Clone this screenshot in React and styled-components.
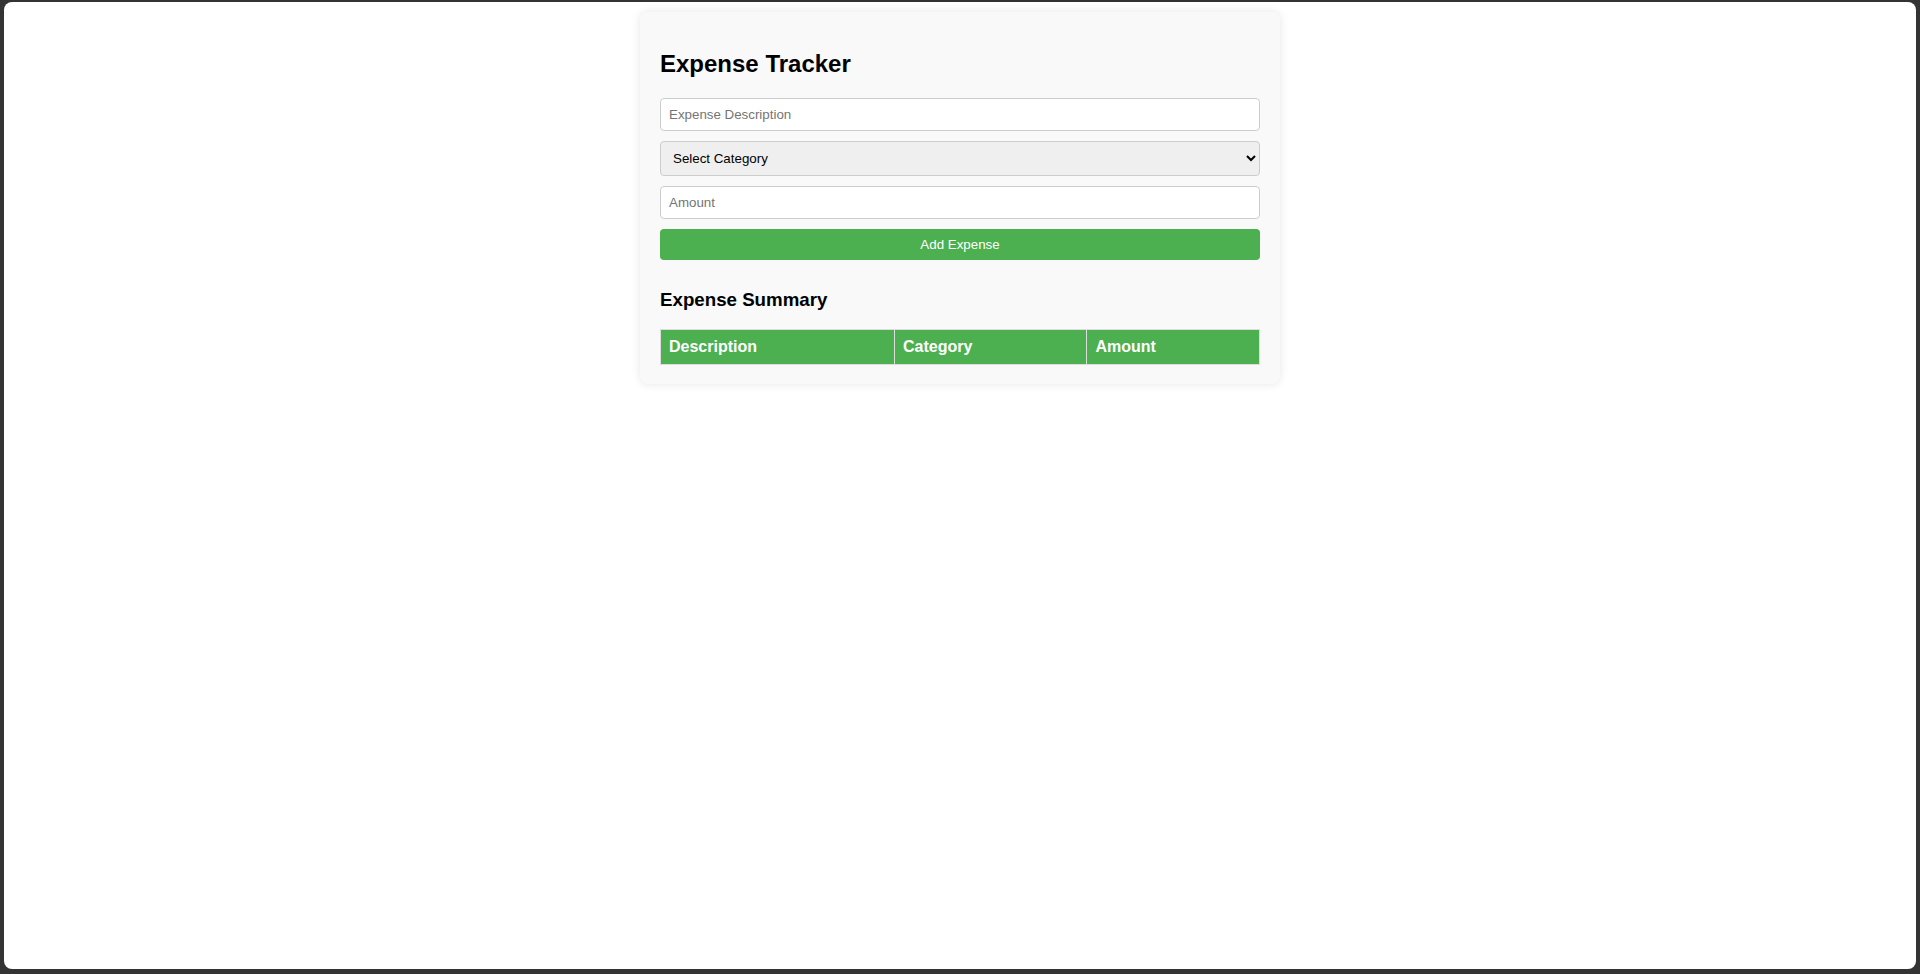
import React, { useState } from "react";
import styled, { createGlobalStyle } from "styled-components";

const GlobalStyle = createGlobalStyle`
  html, body {
    margin: 0;
    padding: 0;
    height: 100%;
    background: #333333;
  }
  body {
    font-family: "Liberation Sans", Arial, sans-serif;
  }
  #root {
    height: 100%;
  }
`;

const Frame = styled.div`
  box-sizing: border-box;
  height: calc(100% - 7px);
  margin: 2px 4px 5px 4px;
  background: #ffffff;
  border-radius: 8px;
  padding-top: 10px;
  overflow: hidden;
`;

const Card = styled.div`
  width: 600px;
  margin: 0 auto;
  padding: 20px 20px 19px;
  background: #f9f9f9;
  border-radius: 8px;
  box-shadow: 0 0 10px rgba(0, 0, 0, 0.1);
`;

const Title = styled.h2`
  font-size: 24px;
  font-weight: bold;
  margin: 18px 0 20px;
  color: #000;
`;

const Form = styled.form`
  display: flex;
  flex-direction: column;
  gap: 10px;
  margin: 0;
`;

const TextInput = styled.input`
  box-sizing: border-box;
  width: 100%;
  padding: 8px;
  border: 1px solid #ccc;
  border-radius: 4px;
  font-family: "Liberation Sans", Arial, sans-serif;
  font-size: 13.333px;
  background: #fff;
  color: #000;
  margin: 0;
  &::placeholder {
    color: #757575;
  }
`;

const Select = styled.select`
  box-sizing: border-box;
  width: 100%;
  padding: 8px;
  border: 1px solid #ccc;
  border-radius: 4px;
  font-family: "Liberation Sans", Arial, sans-serif;
  font-size: 13.333px;
  background-color: #efefef;
  color: #000;
  margin: 0;
`;

const AddButton = styled.button`
  box-sizing: border-box;
  width: 100%;
  padding: 8px;
  border: none;
  border-radius: 4px;
  background: #4caf50;
  color: #fff;
  font-family: "Liberation Sans", Arial, sans-serif;
  font-size: 13.333px;
  cursor: pointer;
  margin: 0;
`;

const Subtitle = styled.h3`
  font-size: 18.72px;
  font-weight: bold;
  margin: 29px 0 18px;
  color: #000;
`;

const Table = styled.table`
  width: 100%;
  border-collapse: collapse;
`;

const HeadCell = styled.th`
  background: #4caf50;
  color: #fff;
  text-align: left;
  padding: 8px;
  border: 1px solid #ddd;
  font-size: 16px;
  font-weight: bold;
`;

export default function App() {
  const [desc, setDesc] = useState("");
  const [cat, setCat] = useState("");
  const [amount, setAmount] = useState("");
  const [expenses, setExpenses] = useState([]);

  const add = (e) => {
    e.preventDefault();
    if (!desc || !cat || !amount) return;
    setExpenses([...expenses, { desc, cat, amount }]);
    setDesc("");
    setCat("");
    setAmount("");
  };

  return (
    <>
      <GlobalStyle />
      <Frame>
        <Card>
          <Title>Expense Tracker</Title>
          <Form onSubmit={add}>
            <TextInput
              type="text"
              placeholder="Expense Description"
              value={desc}
              onChange={(e) => setDesc(e.target.value)}
            />
            <Select value={cat} onChange={(e) => setCat(e.target.value)}>
              <option value="">Select Category</option>
              <option value="Food">Food</option>
              <option value="Transport">Transport</option>
              <option value="Entertainment">Entertainment</option>
              <option value="Utilities">Utilities</option>
              <option value="Other">Other</option>
            </Select>
            <TextInput
              type="number"
              placeholder="Amount"
              value={amount}
              onChange={(e) => setAmount(e.target.value)}
            />
            <AddButton type="submit">Add Expense</AddButton>
          </Form>
          <Subtitle>Expense Summary</Subtitle>
          <Table>
            <thead>
              <tr>
                <HeadCell>Description</HeadCell>
                <HeadCell>Category</HeadCell>
                <HeadCell>Amount</HeadCell>
              </tr>
            </thead>
            <tbody>
              {expenses.map((x, i) => (
                <tr key={i}>
                  <td>{x.desc}</td>
                  <td>{x.cat}</td>
                  <td>{x.amount}</td>
                </tr>
              ))}
            </tbody>
          </Table>
        </Card>
      </Frame>
    </>
  );
}
